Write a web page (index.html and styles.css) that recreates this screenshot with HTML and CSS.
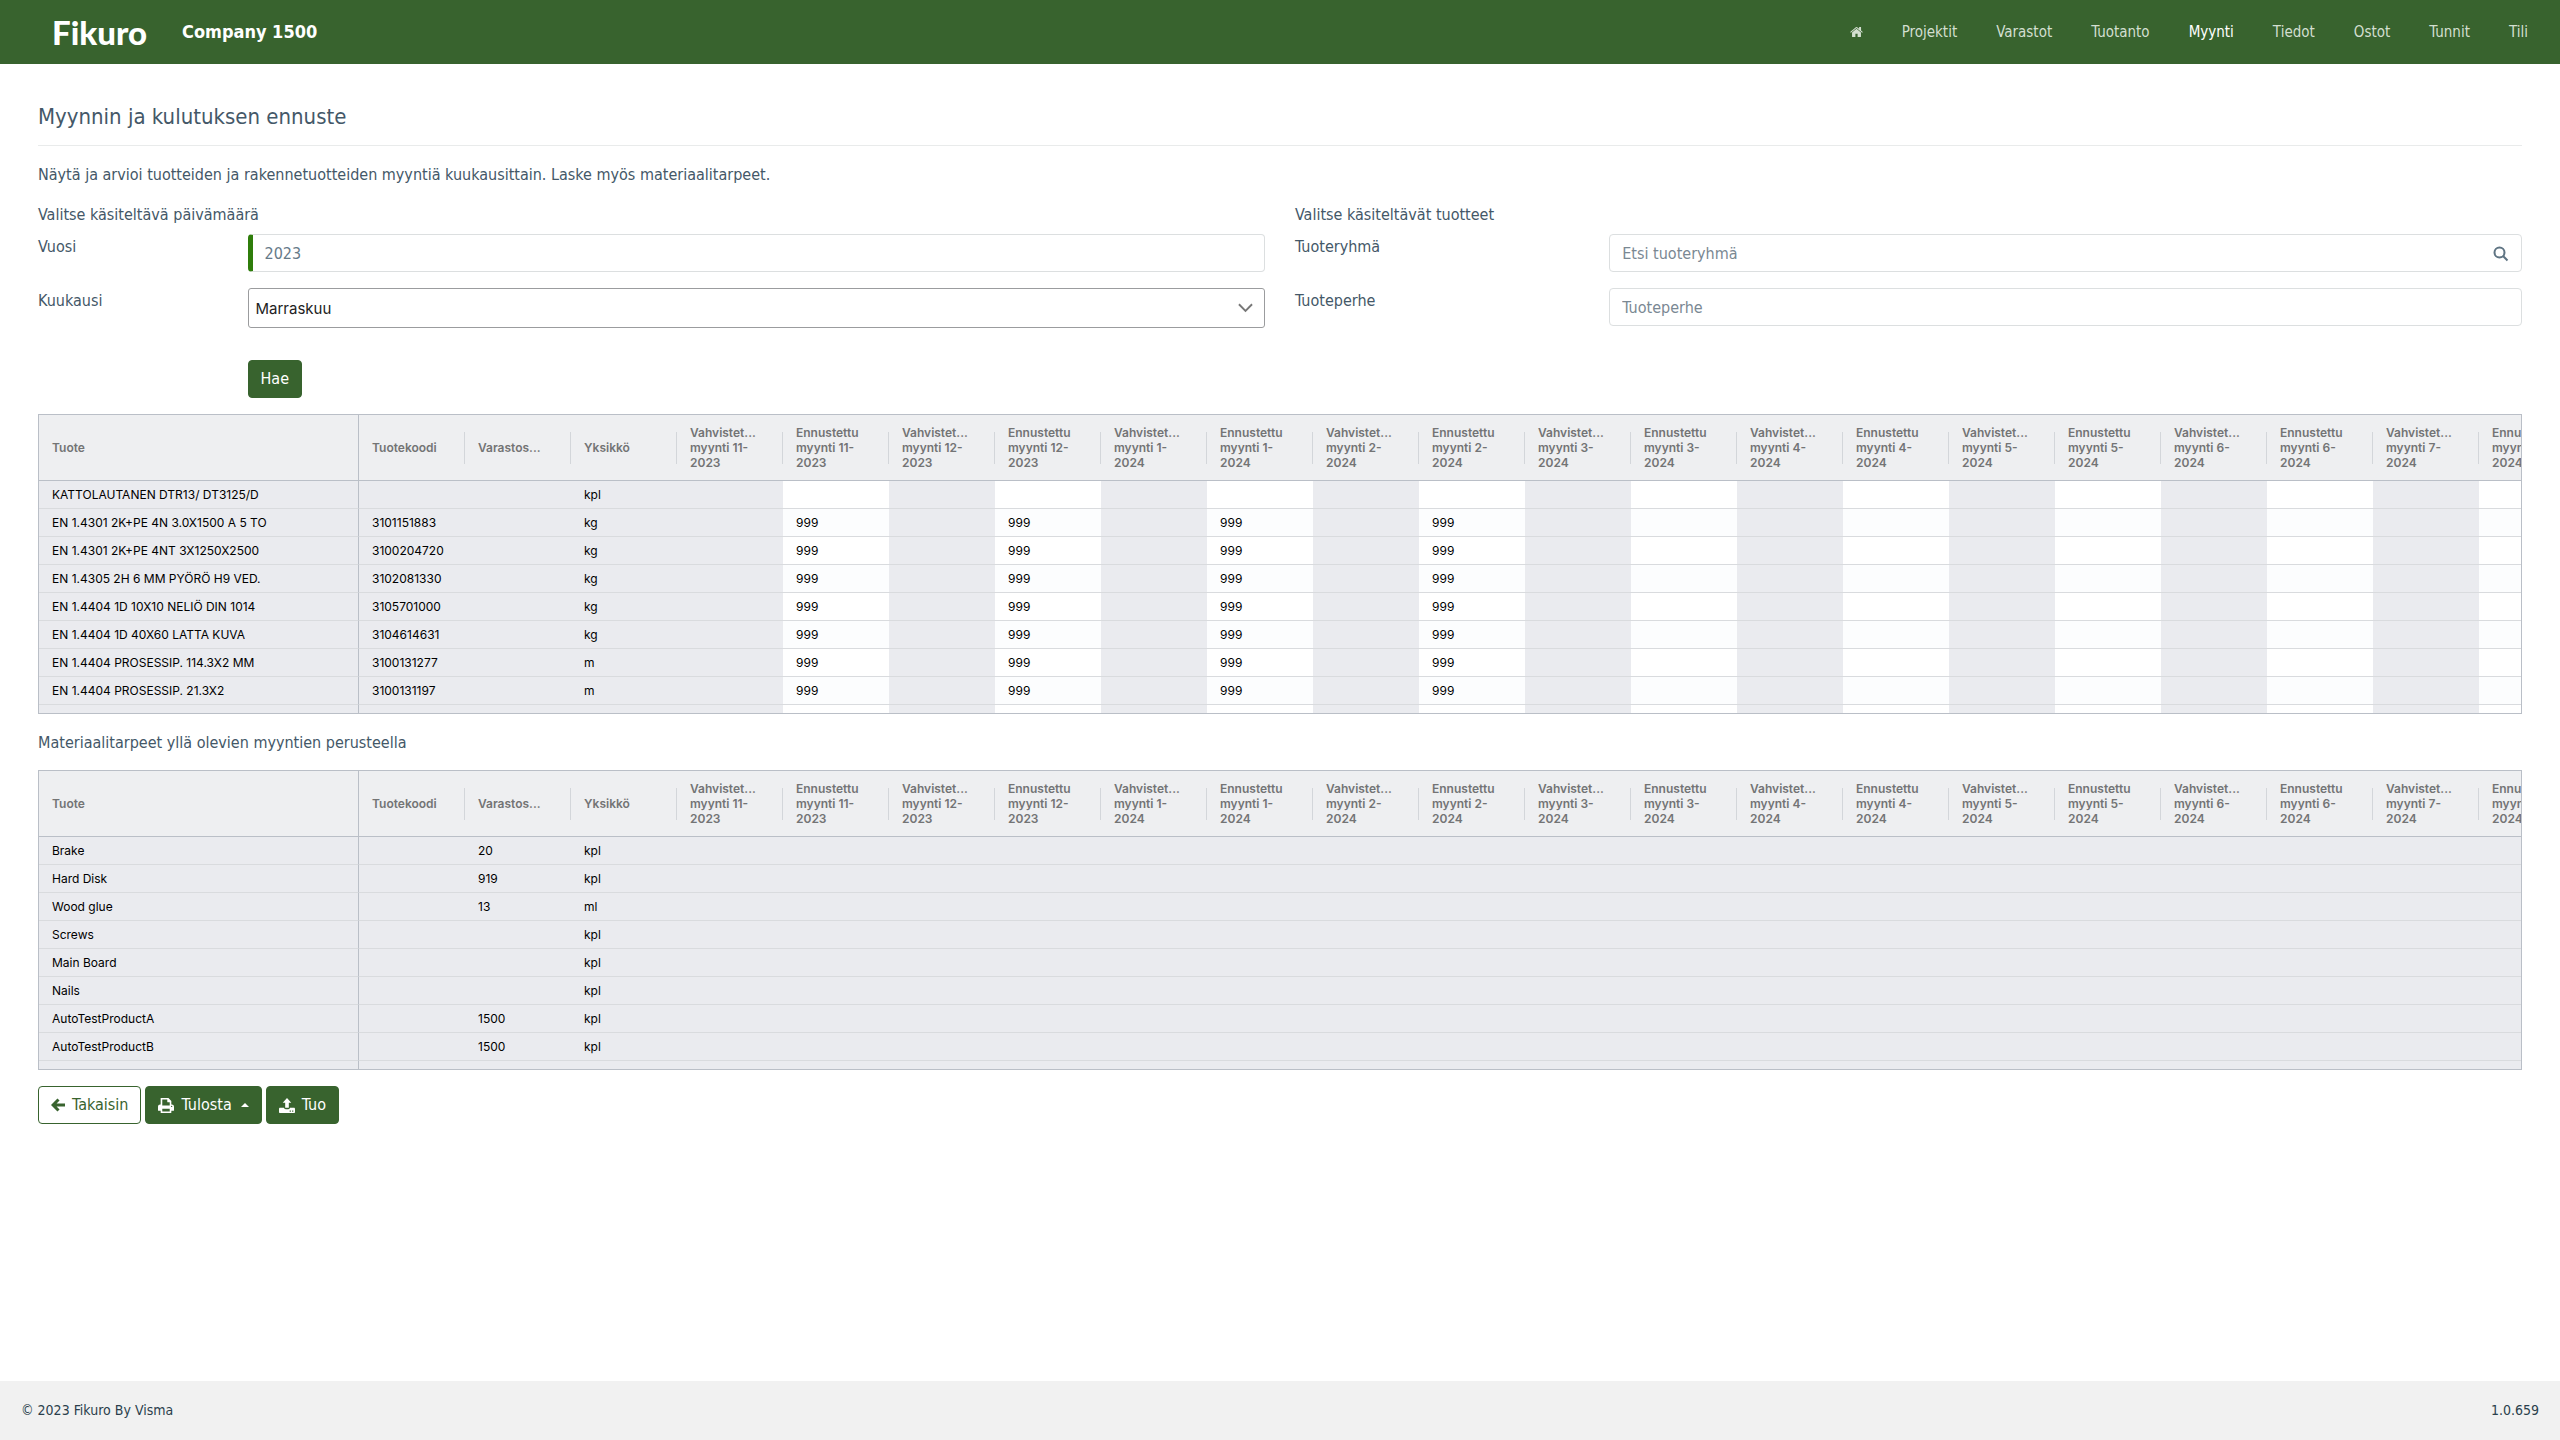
FILE: index.html
```html
<!DOCTYPE html>
<html lang="fi">
<head>
<meta charset="utf-8">
<title>Myynnin ja kulutuksen ennuste</title>
<link rel="stylesheet" href="styles.css">
</head>
<body>
<header class="topbar">
  <a class="logo" href="#">Fikuro</a>
  <span class="company">Company 1500</span>
  <nav class="nav" aria-label="Päävalikko">
    <a href="#" aria-label="Etusivu"><svg class="home-icon" viewBox="0 0 14 12"><path d="M7 2.6 2.2 6.6v4.2c0 .4.2.6.6.6h3V8h2.4v3.4h3c.4 0 .6-.2.6-.6V6.6z"/><path d="M13.8 5.9 11.9 4.3V1c0-.2-.1-.3-.3-.3h-1.5c-.2 0-.3.1-.3.3v1.6L7.7.8a1.1 1.1 0 0 0-1.4 0L.2 5.9l.7.8L7 1.7l6.1 5z"/></svg></a>
    <a href="#">Projektit</a>
    <a href="#">Varastot</a>
    <a href="#">Tuotanto</a>
    <a href="#" class="active" aria-current="page">Myynti</a>
    <a href="#">Tiedot</a>
    <a href="#">Ostot</a>
    <a href="#">Tunnit</a>
    <a href="#">Tili</a>
  </nav>
</header>

<main class="content">
  <h1>Myynnin ja kulutuksen ennuste</h1>
  <p class="intro">Näytä ja arvioi tuotteiden ja rakennetuotteiden myyntiä kuukausittain. Laske myös materiaalitarpeet.</p>

  <form class="filters">
    <fieldset class="group">
      <legend>Valitse käsiteltävä päivämäärä</legend>
      <div class="field">
        <label for="year">Vuosi</label>
        <input id="year" class="required" type="text" value="2023">
      </div>
      <div class="field">
        <label for="month">Kuukausi</label>
        <div class="select-wrap">
          <select id="month"><option>Marraskuu</option></select>
          <svg class="chevron" viewBox="0 0 16 10"><path d="M1 1l7 7 7-7"/></svg>
        </div>
      </div>
      <div class="field submit">
        <button type="button" class="btn">Hae</button>
      </div>
    </fieldset>
    <fieldset class="group wide-labels">
      <legend>Valitse käsiteltävät tuotteet</legend>
      <div class="field">
        <label for="group">Tuoteryhmä</label>
        <div class="search-wrap">
          <input id="group" type="text" placeholder="Etsi tuoteryhmä">
          <svg class="search-icon" viewBox="0 0 16 16"><circle cx="6.5" cy="6.5" r="5"/><path d="M10.3 10.3l4.2 4.2"/></svg>
        </div>
      </div>
      <div class="field">
        <label for="family">Tuoteperhe</label>
        <input id="family" type="text" placeholder="Tuoteperhe">
      </div>
    </fieldset>
  </form>

  <div class="grid-box">
    <table class="grid sales">
      <colgroup><col class="pinned"><col span="21"></colgroup>
      <thead>
        <tr><th>Tuote</th><th>Tuotekoodi</th><th>Varastos...</th><th>Yksikkö</th><th>Vahvistet... myynti 11-2023</th><th>Ennustettu myynti 11-2023</th><th>Vahvistet... myynti 12-2023</th><th>Ennustettu myynti 12-2023</th><th>Vahvistet... myynti 1-2024</th><th>Ennustettu myynti 1-2024</th><th>Vahvistet... myynti 2-2024</th><th>Ennustettu myynti 2-2024</th><th>Vahvistet... myynti 3-2024</th><th>Ennustettu myynti 3-2024</th><th>Vahvistet... myynti 4-2024</th><th>Ennustettu myynti 4-2024</th><th>Vahvistet... myynti 5-2024</th><th>Ennustettu myynti 5-2024</th><th>Vahvistet... myynti 6-2024</th><th>Ennustettu myynti 6-2024</th><th>Vahvistet... myynti 7-2024</th><th>Ennustettu myynti 7-2024</th></tr>
      </thead>
      <tbody>
        <tr><td>KATTOLAUTANEN DTR13/ DT3125/D<td><td><td>kpl<td><td><td><td><td><td><td><td><td><td><td><td><td><td><td><td><td><td></tr>
        <tr><td>EN 1.4301 2K+PE 4N 3.0X1500 A 5 TO<td>3101151883<td><td>kg<td><td>999<td><td>999<td><td>999<td><td>999<td><td><td><td><td><td><td><td><td><td></tr>
        <tr><td>EN 1.4301 2K+PE 4NT 3X1250X2500<td>3100204720<td><td>kg<td><td>999<td><td>999<td><td>999<td><td>999<td><td><td><td><td><td><td><td><td><td></tr>
        <tr><td>EN 1.4305 2H 6 MM PYÖRÖ H9 VED.<td>3102081330<td><td>kg<td><td>999<td><td>999<td><td>999<td><td>999<td><td><td><td><td><td><td><td><td><td></tr>
        <tr><td>EN 1.4404 1D 10X10 NELIÖ DIN 1014<td>3105701000<td><td>kg<td><td>999<td><td>999<td><td>999<td><td>999<td><td><td><td><td><td><td><td><td><td></tr>
        <tr><td>EN 1.4404 1D 40X60 LATTA KUVA<td>3104614631<td><td>kg<td><td>999<td><td>999<td><td>999<td><td>999<td><td><td><td><td><td><td><td><td><td></tr>
        <tr><td>EN 1.4404 PROSESSIP. 114.3X2 MM<td>3100131277<td><td>m<td><td>999<td><td>999<td><td>999<td><td>999<td><td><td><td><td><td><td><td><td><td></tr>
        <tr><td>EN 1.4404 PROSESSIP. 21.3X2<td>3100131197<td><td>m<td><td>999<td><td>999<td><td>999<td><td>999<td><td><td><td><td><td><td><td><td><td></tr>
        <tr><td><td><td><td><td><td><td><td><td><td><td><td><td><td><td><td><td><td><td><td><td><td></tr>
      </tbody>
    </table>
  </div>

  <h2>Materiaalitarpeet yllä olevien myyntien perusteella</h2>

  <div class="grid-box">
    <table class="grid">
      <colgroup><col class="pinned"><col span="21"></colgroup>
      <thead>
        <tr><th>Tuote</th><th>Tuotekoodi</th><th>Varastos...</th><th>Yksikkö</th><th>Vahvistet... myynti 11-2023</th><th>Ennustettu myynti 11-2023</th><th>Vahvistet... myynti 12-2023</th><th>Ennustettu myynti 12-2023</th><th>Vahvistet... myynti 1-2024</th><th>Ennustettu myynti 1-2024</th><th>Vahvistet... myynti 2-2024</th><th>Ennustettu myynti 2-2024</th><th>Vahvistet... myynti 3-2024</th><th>Ennustettu myynti 3-2024</th><th>Vahvistet... myynti 4-2024</th><th>Ennustettu myynti 4-2024</th><th>Vahvistet... myynti 5-2024</th><th>Ennustettu myynti 5-2024</th><th>Vahvistet... myynti 6-2024</th><th>Ennustettu myynti 6-2024</th><th>Vahvistet... myynti 7-2024</th><th>Ennustettu myynti 7-2024</th></tr>
      </thead>
      <tbody>
        <tr><td>Brake<td><td>20<td>kpl<td><td><td><td><td><td><td><td><td><td><td><td><td><td><td><td><td><td></tr>
        <tr><td>Hard Disk<td><td>919<td>kpl<td><td><td><td><td><td><td><td><td><td><td><td><td><td><td><td><td><td></tr>
        <tr><td>Wood glue<td><td>13<td>ml<td><td><td><td><td><td><td><td><td><td><td><td><td><td><td><td><td><td></tr>
        <tr><td>Screws<td><td><td>kpl<td><td><td><td><td><td><td><td><td><td><td><td><td><td><td><td><td><td></tr>
        <tr><td>Main Board<td><td><td>kpl<td><td><td><td><td><td><td><td><td><td><td><td><td><td><td><td><td><td></tr>
        <tr><td>Nails<td><td><td>kpl<td><td><td><td><td><td><td><td><td><td><td><td><td><td><td><td><td><td></tr>
        <tr><td>AutoTestProductA<td><td>1500<td>kpl<td><td><td><td><td><td><td><td><td><td><td><td><td><td><td><td><td><td></tr>
        <tr><td>AutoTestProductB<td><td>1500<td>kpl<td><td><td><td><td><td><td><td><td><td><td><td><td><td><td><td><td><td></tr>
        <tr><td><td><td><td><td><td><td><td><td><td><td><td><td><td><td><td><td><td><td><td><td><td></tr>
      </tbody>
    </table>
  </div>

  <div class="actions">
    <button type="button" class="btn outline"><svg class="icon-back" viewBox="0 0 14 14"><path d="M7.5 1.5 2 7l5.5 5.5M2.500 7H14"/></svg>Takaisin</button>
    <button type="button" class="btn"><svg class="icon" viewBox="0 0 15 14"><path fill-rule="evenodd" d="M2.5 0h7.3l2.7 2.7V6h.5a2 2 0 0 1 2 2v3.5a.5.5 0 0 1-.5.5h-2v1.5a.5.5 0 0 1-.5.5h-9a.5.5 0 0 1-.5-.5V12H.5a.5.5 0 0 1-.5-.5V8a2 2 0 0 1 2-2h.5zM4 1.300V7h7V4H9.200a.5.5 0 0 1-.5-.5V1.300zM4 10v2.700h7V10zM12.800 7.300a.6.6 0 1 0 0 1.200.6.6 0 0 0 0-1.200z"/></svg>Tulosta<svg class="caret" viewBox="0 0 8 4"><path d="M0 4l4-4 4 4z"/></svg></button>
    <button type="button" class="btn"><svg class="icon" viewBox="0 0 15 14"><path fill-rule="evenodd" d="M7.5 0l4 4.5H9.200V9H5.800V4.500H3.500zM1 9.200h3.600c.2.9.9 1.300 1.700 1.300h2.400c.8 0 1.500-.4 1.700-1.300H14c.6 0 1 .4 1 1V13c0 .6-.4 1-1 1H1c-.6 0-1-.4-1-1v-2.800c0-.6.4-1 1-1zM10 11.800v1.100h1.100v-1.100zM12.300 11.800v1.100h1.100v-1.100z"/></svg>Tuo</button>
  </div>
</main>

<footer class="footer">
  <span>© 2023 Fikuro By Visma</span>
  <span>1.0.659</span>
</footer>
</body>
</html>
```
FILE: styles.css
```css
* { box-sizing: border-box; }

body {
  margin: 0;
  min-height: 100vh;
  display: flex;
  flex-direction: column;
  background: #fff;
  color: #445868;
  font: 16px/24px "DejaVu Sans Condensed", "Noto Sans", sans-serif;
}

/* Top bar */
.topbar {
  display: flex;
  align-items: center;
  height: 64px;
  padding: 0 32px 0 52px;
  background: #38632e;
  color: #fff;
}
.logo {
  width: 130px;
  color: #fff;
  font: 900 33px/40px Lato, sans-serif;
  text-decoration: none;
}
.company { font-size: 18px; font-weight: 700; }
.nav {
  display: flex;
  align-items: center;
  gap: 39px;
  margin-left: auto;
  font-size: 15px;
}
.nav a { color: #d3dfd0; text-decoration: none; }
.nav .active { color: #fff; }
.home-icon { display: block; width: 13px; height: 12px; fill: currentColor; }

/* Page content */
.content { flex: 1; padding: 37px 38px 48px; }
h1 {
  margin: 0 0 17px;
  padding-bottom: 12px;
  border-bottom: 1px solid #e9ebeb;
  font-size: 22px;
  line-height: 32px;
  font-weight: 400;
}
.intro { margin: 0 0 16px; }
h2 {
  margin: 17px 0 15px;
  font-size: 16px;
  line-height: 24px;
  font-weight: 400;
}

/* Filters */
.filters {
  display: grid;
  grid-template-columns: 1fr 1fr;
  gap: 30px;
  margin-bottom: 16px;
}
.group { min-width: 0; margin: 0; padding: 0; border: 0; }
.group legend { padding: 0 0 7px; }
.field {
  display: grid;
  grid-template-columns: repeat(12, minmax(0, 1fr));
  column-gap: 30px;
  margin-bottom: 16px;
}
.field > label { grid-column: span 2; padding-top: 1px; }
.field > :last-child { grid-column: span 10; }
.wide-labels .field > label { grid-column: span 3; }
.wide-labels .field > :last-child { grid-column: span 9; }
.submit { margin: 32px 0 0; }
.submit > .btn:last-child { grid-column: 3 / span 10; justify-self: start; }

input, select {
  display: block;
  width: 100%;
  height: 38px;
  padding: 0 12px;
  border: 1px solid #dcdfe0;
  border-radius: 4px;
  background: #fff;
  color: #667a89;
  font: inherit;
}
input::placeholder { color: #7a8893; opacity: 1; }
.required { border-left: 5px solid #2f7d0b; }
.select-wrap, .search-wrap { position: relative; }
select {
  appearance: none;
  height: 40px;
  padding: 0 7px;
  border-color: #9b9c9e;
  border-radius: 3px;
  color: #222;
  font: 15px Inter, sans-serif;
}
.chevron {
  position: absolute;
  right: 12px;
  top: 15px;
  width: 15px;
  height: 10px;
  fill: none;
  stroke: #777;
  stroke-width: 2;
}
.search-icon {
  position: absolute;
  right: 13px;
  top: 12px;
  width: 16px;
  height: 16px;
  fill: none;
  stroke: #5f7483;
  stroke-width: 2;
}

/* Buttons */
.btn {
  display: inline-flex;
  align-items: center;
  height: 38px;
  padding: 0 12px;
  border: 1px solid #38632e;
  border-radius: 4px;
  background: #38632e;
  color: #fff;
  font: inherit;
}
.btn.outline { background: #fff; color: #38632e; }
.icon { width: 16px; height: 15px; margin-right: 7px; fill: currentColor; }
.icon-back {
  width: 14px;
  height: 14px;
  margin-right: 7px;
  fill: none;
  stroke: currentColor;
  stroke-width: 3;
}
.caret { width: 8px; height: 4px; margin-left: 9px; fill: currentColor; }
.actions { display: flex; gap: 4px; margin-top: 16px; }

/* Data grids */
.grid-box {
  height: 300px;
  overflow: auto;
  scrollbar-width: none;
  border: 1px solid #babfc7;
}
.grid {
  width: 2546px;
  table-layout: fixed;
  border-spacing: 0;
  color: #000;
  font: 12px/15px Inter, sans-serif;
}
.grid col { width: 106px; }
.grid .pinned { width: 320px; }
.grid th {
  height: 66px;
  padding: 0 12px 0 13px;
  border-bottom: 1px solid #babfc7;
  background: linear-gradient(#d3d6da, #d3d6da) right center / 1px 32px no-repeat #eeeff1;
  color: #737475;
  font-weight: 600;
  text-align: left;
}
.grid td {
  height: 28px;
  padding: 0 12px 0 13px;
  border-bottom: 1px solid #d9dbde;
  background: #eaebef;
}
.grid th:first-child, .grid td:first-child { border-right: 1px solid #babfc7; }
.grid th:first-child { background: #eeeff1; }
.sales td:nth-child(2n+6) { background: #fff; }
.sales tr:nth-child(even) td:nth-child(2n+6) { background: #fcfdfe; }

/* Footer */
.footer {
  display: flex;
  justify-content: space-between;
  align-items: center;
  height: 59px;
  padding: 0 21px 2px;
  background: #f1f1f1;
  color: #2b3f4c;
  font-size: 14px;
}
```
